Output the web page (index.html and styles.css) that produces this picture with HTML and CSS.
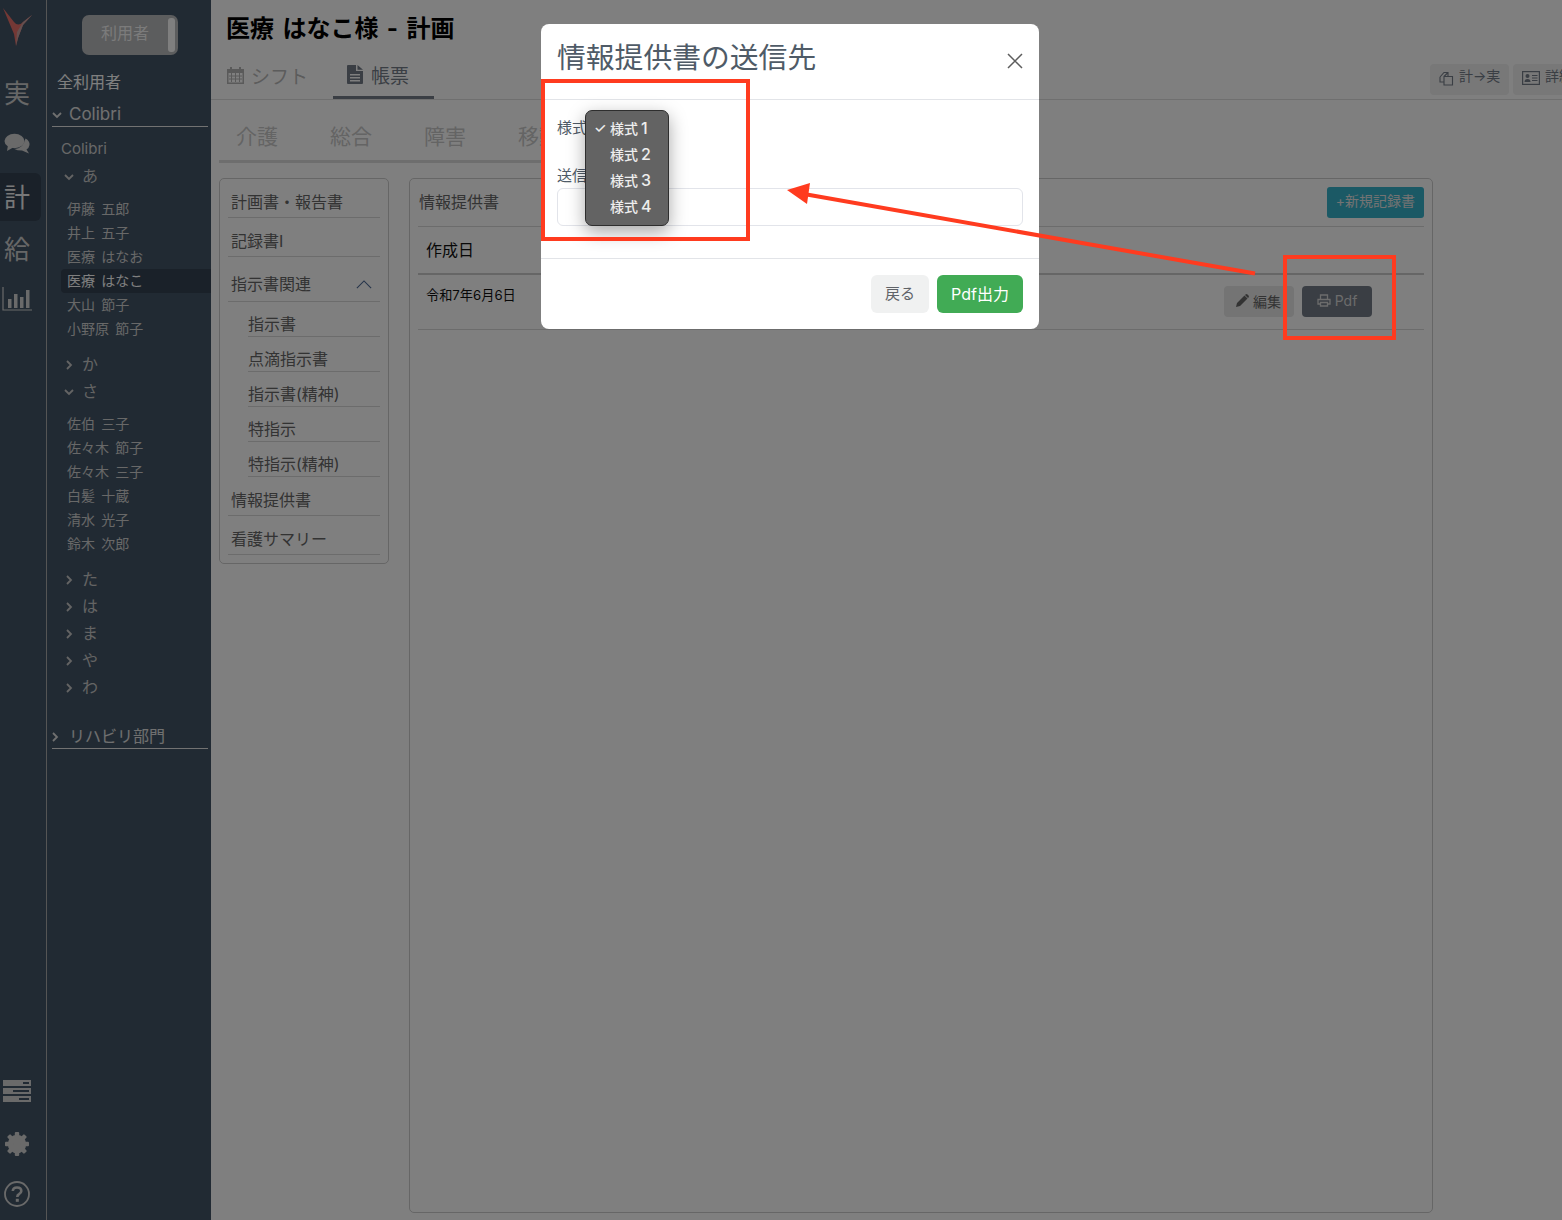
FILE: index.html
```html
<!DOCTYPE html>
<html lang="ja">
<head>
<meta charset="utf-8">
<title>情報提供書の送信先</title>
<link rel="stylesheet" href="styles.css">
</head>
<body>
<div class="app">
  <nav class="rail">
    <svg class="logo" viewBox="0 0 32 40"><path d="M2 0 L13 14 Q17 19 22 14 L31 7 L22 17 L17 30 L15 38 L13 26 Z" fill="#e8706a"/><path d="M22 14 L31 7 L22 17 L17 30 L15 38 L16 24Z" fill="#c8a0a0"/></svg>
    <div class="rail-item rail-first">実</div>
    <div class="rail-item rail-icon">
      <svg width="26" height="22" viewBox="0 0 26 22"><ellipse cx="10.5" cy="8" rx="10" ry="7.2" fill="#d4d4d4"/><path d="M4 12 L3 18 L10 14Z" fill="#d4d4d4"/><path d="M21.500 5.500 Q26 8 25.500 12 Q25 15 22.500 16.500 L25 20.500 L18 17.500 Q13 17.500 10.500 16 Q19 16 21.500 5.500Z" fill="#d4d4d4"/></svg>
    </div>
    <div class="rail-item rail-active">計</div>
    <div class="rail-item rail-pay">給</div>
    <div class="rail-item rail-icon rail-chart">
      <svg width="30" height="24" viewBox="0 0 30 24"><path d="M1 0 V23 H30" fill="none" stroke="#d4d4d4" stroke-width="1.200"/><rect x="6" y="12" width="3.500" height="9" fill="#d4d4d4"/><rect x="12" y="7" width="3.500" height="14" fill="#d4d4d4"/><rect x="18" y="10" width="3.500" height="11" fill="#d4d4d4"/><rect x="24" y="3" width="3.500" height="18" fill="#d4d4d4"/></svg>
    </div>
    <div class="rail-bottom">
      <div class="rail-item rail-icon rail-server">
        <svg width="28" height="22" viewBox="0 0 28 22"><path fill="#d4d4d4" fill-rule="evenodd" d="M0 0H28V6H0Z M20 2V4H26V2Z M0 8H28V14H0Z M10 10V12H26V10Z M0 16H28V22H0Z M16 18V20H26V18Z"/></svg>
      </div>
      <div class="rail-item rail-icon">
        <svg width="24" height="24" viewBox="0 0 24 24"><g fill="#d4d4d4"><rect x="9.800" y="0" width="4.400" height="24" rx="1"/><rect x="9.800" y="0" width="4.400" height="24" rx="1" transform="rotate(45 12 12)"/><rect x="9.800" y="0" width="4.400" height="24" rx="1" transform="rotate(90 12 12)"/><rect x="9.800" y="0" width="4.400" height="24" rx="1" transform="rotate(135 12 12)"/></g><circle cx="12" cy="12" r="6.500" fill="none" stroke="#d4d4d4" stroke-width="5.500"/></svg>
      </div>
      <div class="rail-item rail-icon">
        <svg width="26" height="26" viewBox="0 0 26 26"><circle cx="13" cy="13" r="12" fill="none" stroke="#d4d4d4" stroke-width="1.800"/><path d="M8.800 10 Q9 6.500 13 6.500 Q17.300 6.500 17.300 10 Q17.300 12 15 13.200 Q13.300 14 13.300 16" fill="none" stroke="#d4d4d4" stroke-width="2.600"/><rect x="11.800" y="17.800" width="3" height="3" fill="#d4d4d4"/></svg>
      </div>
    </div>
  </nav>

  <aside class="side">
    <div class="toggle"><span class="toggle-text">利用者</span><span class="toggle-knob"></span></div>
    <div class="all">全利用者</div>
    <div class="group"><svg class="chev" viewBox="0 0 10 10"><path d="M1 3 L5 7 L9 3"/></svg>Colibri</div>
    <div class="org">Colibri</div>
    <div class="kana"><svg class="chev" viewBox="0 0 10 10"><path d="M1 3 L5 7 L9 3"/></svg>あ</div>
    <ul class="names">
      <li>伊藤 五郎</li><li>井上 五子</li><li>医療 はなお</li><li class="sel">医療 はなこ</li><li>大山 節子</li><li>小野原 節子</li>
    </ul>
    <div class="kana kana-gap"><svg class="chev" viewBox="0 0 10 10"><path d="M3 1 L7 5 L3 9"/></svg>か</div>
    <div class="kana"><svg class="chev" viewBox="0 0 10 10"><path d="M1 3 L5 7 L9 3"/></svg>さ</div>
    <ul class="names">
      <li>佐伯 三子</li><li>佐々木 節子</li><li>佐々木 三子</li><li>白髪 十蔵</li><li>清水 光子</li><li>鈴木 次郎</li>
    </ul>
    <div class="kana kana-gap"><svg class="chev" viewBox="0 0 10 10"><path d="M3 1 L7 5 L3 9"/></svg>た</div>
    <div class="kana"><svg class="chev" viewBox="0 0 10 10"><path d="M3 1 L7 5 L3 9"/></svg>は</div>
    <div class="kana"><svg class="chev" viewBox="0 0 10 10"><path d="M3 1 L7 5 L3 9"/></svg>ま</div>
    <div class="kana"><svg class="chev" viewBox="0 0 10 10"><path d="M3 1 L7 5 L3 9"/></svg>や</div>
    <div class="kana"><svg class="chev" viewBox="0 0 10 10"><path d="M3 1 L7 5 L3 9"/></svg>わ</div>
    <div class="group group-rehab"><svg class="chev" viewBox="0 0 10 10"><path d="M3 1 L7 5 L3 9"/></svg>リハビリ部門</div>
  </aside>

  <main class="main">
    <header class="head">
      <h1 class="title">医療 はなこ様 - 計画</h1>
      <div class="tabrow">
        <div class="tab">
          <svg width="19" height="19" viewBox="0 0 19 19"><path fill="#b4b4b4" fill-rule="evenodd" d="M1 3H4V1H6V3H13V1H15V3H18V18H1Z M2.500 7V16.500H16.500V7Z"/><path d="M5.500 7V16 M9.500 7V16 M13.500 7V16 M3 10H16 M3 13H16" stroke="#b4b4b4" stroke-width="1"/></svg>
          シフト
        </div>
        <div class="tab tab-on">
          <svg width="16" height="19" viewBox="0 0 16 19"><path fill="#747c88" fill-rule="evenodd" d="M0 1Q0 0 1 0H9V6H16V18Q16 19 15 19H1Q0 19 0 18Z M3 9V10.500H13V9Z M3 12V13.500H13V12Z M3 15V16.500H13V15Z M10.500 0L16 4.800H10.500Z"/></svg>
          帳票
        </div>
        <div class="actions">
          <button class="act">
            <svg width="15" height="15" viewBox="0 0 15 15"><path d="M1 6 L5 1.500 H9 V5 M5 5.500 H13.500 V14 H5 Z M1 6 V11 H5 M9 1.500 L5 5.500" fill="none" stroke="#747c88" stroke-width="1.100"/></svg>
            <span class="act-text">計→実</span>
          </button>
          <button class="act act-wide">
            <svg width="18" height="14" viewBox="0 0 18 14"><rect x=".6" y=".6" width="16.800" height="12.800" fill="none" stroke="#747c88" stroke-width="1.200"/><circle cx="5.500" cy="5" r="2" fill="#747c88"/><path d="M2.500 11 Q2.500 8 5.500 8 Q8.500 8 8.500 11Z" fill="#747c88"/><path d="M10 4.500H15.500 M10 7H15.500 M10 9.500H15.500" stroke="#747c88"/></svg>
            <span class="act-text">詳細</span>
          </button>
        </div>
      </div>
    </header>

    <div class="cats"><span>介護</span><span>総合</span><span>障害</span><span>移動</span></div>

    <div class="panels">
      <section class="panel menu">
        <div class="mi">計画書・報告書</div>
        <div class="mi">記録書I</div>
        <div class="mi mi-open">指示書関連<svg class="up" viewBox="0 0 18 10"><path d="M1 9 L9 1 L17 9"/></svg></div>
        <div class="mi-sub">指示書</div>
        <div class="mi-sub">点滴指示書</div>
        <div class="mi-sub">指示書(精神)</div>
        <div class="mi-sub">特指示</div>
        <div class="mi-sub">特指示(精神)</div>
        <div class="mi">情報提供書</div>
        <div class="mi">看護サマリー</div>
      </section>
      <section class="panel docs">
        <div class="docs-head"><span class="docs-title">情報提供書</span><button class="btn-new">+新規記録書</button></div>
        <div class="th">作成日</div>
        <div class="tr">
          <span class="date">令和7年6月6日</span>
          <div class="row-btns">
            <button class="rb rb-edit">
              <svg width="13" height="13" viewBox="0 0 13 13"><path d="M0 13 L1 9 L8.500 1.500 L11.500 4.500 L4 12 Z M9.500 .5 Q10.500 -.3 11.500 .5 L12.500 1.500 Q13.300 2.500 12.500 3.500 L12 4 L9 1Z" fill="#666"/></svg>
              編集
            </button>
            <button class="rb rb-pdf">
              <svg width="14" height="13" viewBox="0 0 14 13"><path d="M3.500 5 V1 H10.500 V5 M3 10 H1 V5.500 H13 V10 H11 M3.500 8.500 H10.500 V12 H3.500 Z" fill="none" stroke="#d8d8d8" stroke-width="1.300"/></svg>
              Pdf
            </button>
          </div>
        </div>
      </section>
    </div>
  </main>
</div>

<div class="backdrop"></div>

<div class="modal">
  <div class="m-head">
    <h2 class="m-title">情報提供書の送信先</h2>
    <svg class="m-close" viewBox="0 0 16 16"><path d="M1 1 L15 15 M15 1 L1 15"/></svg>
  </div>
  <div class="m-body">
    <div class="m-label m-label-gap">様式</div>
    <div class="m-label">送信先</div>
    <div class="m-input"></div>
  </div>
  <div class="m-foot">
    <button class="m-btn m-back">戻る</button>
    <button class="m-btn m-pdf">Pdf出力</button>
  </div>
  <ul class="popup">
    <li><span class="check">✓</span>様式<span class="num">1</span></li>
    <li>様式<span class="num">2</span></li>
    <li>様式<span class="num">3</span></li>
    <li>様式<span class="num">4</span></li>
  </ul>
</div>

<div class="mark mark-a"></div>
<div class="mark mark-b"></div>
<svg class="arrow" width="1562" height="1220" viewBox="0 0 1562 1220">
  <path d="M1255 273.500 L804 194" fill="none" stroke="#ff3b1f" stroke-width="4"/>
  <path d="M787 190 L810 183 L807 204 Z" fill="#ff3b1f"/>
</svg>
</body>
</html>
```
FILE: styles.css
```css
* { box-sizing: border-box; }
html, body { margin: 0; height: 1220px; overflow: hidden; }
body {
  font-family: Inter, "Noto Sans CJK JP", "Noto Sans", sans-serif;
  color: #666;
  background: #fff;
  position: relative;
}
ul { list-style: none; margin: 0; padding: 0; }
button { font-family: inherit; border: 0; margin: 0; }

.app { display: flex; height: 1220px; }

/* icon rail */
.rail {
  width: 47px;
  flex: none;
  background: #435567;
  border-right: 1px solid #aaa;
  display: flex;
  flex-direction: column;
}
.logo { width: 32px; height: 40px; margin: 8px 0 0 1px; flex: none; }
.rail-item {
  width: 34px;
  height: 48px;
  flex: none;
  display: flex;
  align-items: center;
  justify-content: center;
  font-size: 26px;
  color: #cfcfcf;
  margin-top: 3px;
  padding-bottom: 3px;
}
.rail-first { margin-top: 21px; }
.rail-icon { padding-bottom: 0; }
.rail-active {
  width: 41px;
  margin-top: 5px;
  padding: 0 7px 3px 0;
  background: #344252;
  border-radius: 0 6px 6px 0;
  color: #f0f0f0;
}
.rail-pay { margin-top: 4px; }
.rail-chart { margin-top: 2px; }
.rail-bottom { margin-top: auto; padding-bottom: 1px; }
.rail-bottom .rail-item { height: 50px; margin-top: 0; }
.rail-bottom .rail-server { padding-bottom: 6px; }

/* tree */
.side {
  width: 164px;
  flex: none;
  background: #435567;
  color: #d4d4d4;
}
.toggle {
  width: 96px;
  height: 40px;
  margin: 15px 0 0 35px;
  padding: 3px 2px 3px 0;
  background: #b8babc;
  border-radius: 7px;
  display: flex;
  justify-content: flex-end;
  position: relative;
}
.toggle-text { position: absolute; left: 19px; top: 6px; line-height: 24px; font-size: 16px; color: #f6f6f6; }
.toggle-knob { width: 7px; background: #fff; border-radius: 3px; margin-right: 1px; }
.all { margin: 13px 0 0 10px; line-height: 28px; font-size: 16px; color: #fff; }
.group {
  margin: 4px 3px 0 5px;
  height: 27px;
  padding-top: 1px;
  border-bottom: 1px solid #e4e4e4;
  line-height: 26px;
  font-size: 17px;
  color: #e0e0e0;
  display: flex;
  align-items: center;
}
.group .chev { margin-right: 7px; margin-top: 3px; }
.group-rehab { margin-top: 21px; font-size: 16px; }
.group-rehab .chev { margin-left: -2px; margin-right: 9px; }
.chev { width: 10px; height: 10px; flex: none; fill: none; stroke: currentColor; stroke-width: 1.800; }
.org { margin: 10px 0 0 14px; line-height: 24px; font-size: 15px; color: #d0d0d0; }
.kana {
  height: 27px;
  padding: 0 0 4px 17px;
  display: flex;
  align-items: center;
  font-size: 16px;
  color: #c8c8c8;
}
.org + .kana { margin-top: 2px; }
.kana .chev { margin-right: 8px; margin-top: 4px; }
.kana-gap { margin-top: 10px; }
.names { margin-top: 7px; }
.names li {
  height: 24px;
  line-height: 23px;
  padding-left: 6px;
  margin-left: 14px;
  font-size: 14px;
  word-spacing: 2.400px;
  color: #d0d0d0;
}
.names .sel { background: #344252; border-radius: 4px 0 0 4px; color: #fff; }

/* main */
.main { flex: 1; min-width: 0; overflow: hidden; }
.head { border-bottom: 1px solid #dedede; height: 100px; }
.title {
  margin: 0;
  padding: 12px 0 0 15px;
  font-size: 24px;
  line-height: 34px;
  font-weight: 700;
  word-spacing: 2.700px;
  color: #000;
}
.tabrow { display: flex; width: calc(100% + 40px); padding-left: 15px; margin-top: 18px; height: 35px; }
.tab {
  display: flex;
  align-items: center;
  gap: 6px;
  font-size: 19px;
  color: #b8b8b8;
  height: 35px;
  padding-bottom: 12px;
}
.tab-on {
  color: #747c88;
  margin-left: 25px;
  padding: 0 25px 12px 14px;
  border-bottom: 3px solid #747c88;
}
.tab-on svg { margin-right: 2px; }
.actions { margin-left: auto; display: flex; gap: 4px; }
.act {
  height: 31px;
  width: 79px;
  display: flex;
  align-items: center;
  gap: 5px;
  padding: 0 0 0 9px;
  background: #f0f0f0;
  border-radius: 4px;
  font-size: 14px;
  color: #747c88;
  white-space: nowrap;
}
.act svg { margin-top: -3px; }
.act-text { margin-top: -7px; line-height: 24px; }
.act-wide { width: 89px; }

.cats {
  width: 600px;
  margin-left: 8px;
  height: 63px;
  padding: 13px 0 0 17px;
  display: flex;
  gap: 52px;
  font-size: 21px;
  line-height: 47px;
  color: #c8c8c8;
  border-bottom: 3px solid #ddd;
}
.panels { display: flex; gap: 20px; margin: 15px 0 0 8px; align-items: flex-start; }
.panel { border: 1px solid #ccc; border-radius: 5px; background: #fff; }
.menu { width: 170px; padding: 0 8px 8px; }
.mi {
  padding: 11px 0 3px 3px;
  line-height: 24px;
  font-size: 16px;
  color: #666;
  border-bottom: 1px solid #d8d8d8;
  position: relative;
}
.mi-open { padding: 15px 0 5px 3px; }
.up {
  position: absolute;
  right: 8px;
  top: 23px;
  width: 16px;
  height: 9px;
  fill: none;
  stroke: #4f6b96;
  stroke-width: 1.300;
}
.mi-sub {
  margin-left: 20px;
  padding-top: 10px;
  line-height: 24px;
  font-size: 16px;
  color: #666;
  border-bottom: 1px solid #d8d8d8;
}
.docs { width: 1024px; height: 1035px; padding: 0 8px; }
.docs-head {
  height: 48px;
  padding: 8px 0 8px 1px;
  display: flex;
  align-items: center;
  justify-content: space-between;
  font-size: 16px;
  color: #666;
  border-bottom: 1px solid #d8d8d8;
}
.docs-title { margin-top: -4px; }
.btn-new {
  width: 97px;
  height: 31px;
  background: #36b2ca;
  border-radius: 3px;
  color: #e6e6e6;
  font-size: 14px;
  padding: 0 0 5px;
}
.th {
  height: 48px;
  padding: 11px 0 0 8px;
  line-height: 24px;
  font-size: 16px;
  color: #111;
  border-bottom: 2px solid #ccc;
}
.tr {
  height: 55px;
  padding-left: 8px;
  display: flex;
  border-bottom: 1px solid #d8d8d8;
}
.date { font-size: 13.200px; line-height: 24px; margin-top: 8px; color: #111; }
.row-btns { margin-left: auto; margin-right: 52px; margin-top: 11px; display: flex; gap: 8px; }
.rb {
  width: 70px;
  height: 31px;
  border-radius: 4px;
  display: flex;
  align-items: center;
  justify-content: center;
  gap: 4px;
  font-size: 14px;
  padding: 0 0 2px;
}
.rb-edit { background: #e8e8e8; color: #666; padding-right: 1px; }
.rb-pdf { background: #747c88; color: #d8d8d8; }

/* overlays */
.backdrop { position: absolute; inset: 0; background: rgba(0, 0, 0, .5); }
.modal {
  position: absolute;
  left: 541px;
  top: 24px;
  width: 498px;
  height: 305px;
  background: #fff;
  border-radius: 8px;
}
.m-head { height: 76px; border-bottom: 1px solid #e2e4e8; position: relative; padding-left: 16px; }
.m-title { margin: 0; font-size: 28.800px; font-weight: 400; line-height: 68px; color: #4f5b67; }
.m-close {
  position: absolute;
  right: 16px;
  top: 29px;
  width: 16px;
  height: 16px;
  fill: none;
  stroke: #5c5c5c;
  stroke-width: 1.500;
}
.m-body { height: 158px; padding: 16px 16px 0; }
.m-label { line-height: 24px; font-size: 15px; color: #4f5b67; }
.m-label-gap { margin-bottom: 24px; }
.m-input { height: 38px; border: 1px solid #e2e4ea; border-radius: 6px; }
.m-foot {
  height: 71px;
  padding: 16px;
  display: flex;
  justify-content: flex-end;
  gap: 8px;
  border-top: 1px solid #e2e4e8;
}
.m-btn { height: 38px; border-radius: 6px; font-size: 16px; padding: 0 0 2px; }
.m-back { width: 58px; background: #f0f1f1; color: #5f6368; font-size: 15px; padding-bottom: 4px; }
.m-pdf { width: 86px; background: #41ab55; color: #fff; }

.popup {
  position: absolute;
  left: 44px;
  top: 86px;
  width: 84px;
  height: 116px;
  padding-top: 4px;
  background: #636363;
  border: 1px solid #2e2e2e;
  border-radius: 7px;
  box-shadow: 0 6px 18px rgba(0, 0, 0, .35);
  color: #ededed;
  font-size: 14px;
  font-weight: 500;
}
.popup li { height: 26px; line-height: 26px; padding-left: 24px; position: relative; }
.num { font-size: 16px; margin-left: 3px; }
.check { position: absolute; left: 8px; font-size: 14px; }

.mark { position: absolute; border: 4px solid #ff3b1f; }
.mark-a { left: 541px; top: 79px; width: 209px; height: 162px; }
.mark-b { left: 1283px; top: 255px; width: 113px; height: 85px; }
.arrow { position: absolute; left: 0; top: 0; pointer-events: none; }
```
